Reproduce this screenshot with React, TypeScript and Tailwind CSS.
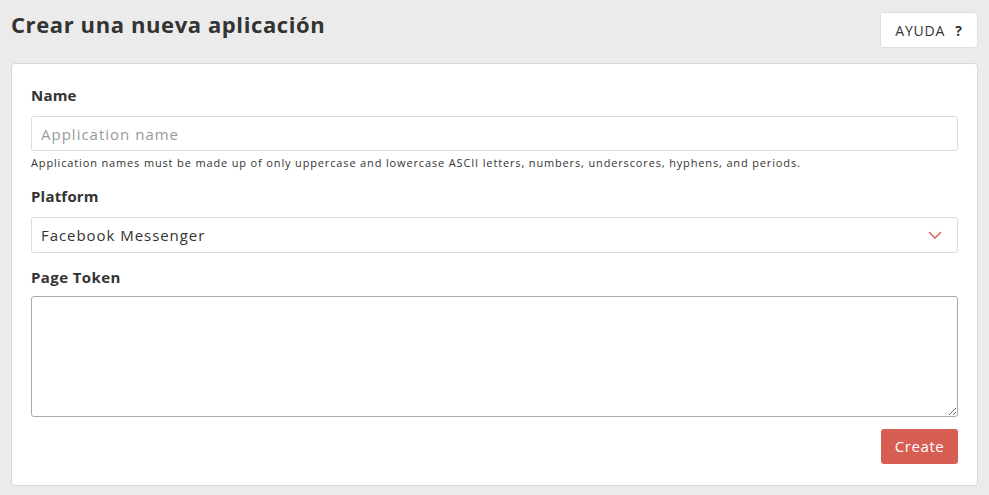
import React from "react";

export default function App() {
  const font = { fontFamily: '"Open Sans", "Liberation Sans", sans-serif' };
  return (
    <div className="min-h-[495px] w-full bg-[#ebebeb] px-[11px] pt-[8px] text-[#333]" style={font}>
      <div className="flex items-start justify-between">
        <h1 className="text-[22px] font-bold leading-[32px] tracking-[0.6px] text-[#333]">
          Crear una nueva aplicación
        </h1>
        <button className="mt-[4px] flex h-[36px] w-[98px] items-center justify-center gap-[10px] rounded-[3px] border border-[#e0e0e0] bg-white text-[14px] tracking-[0.8px] text-[#333]">
          <span>AYUDA</span>
          <span className="font-bold">?</span>
        </button>
      </div>
      <div className="mt-[15px] rounded-[4px] border border-[#d8d8d8] bg-white px-[19px] pb-[21px] pt-[20px]">
        <label className="block text-[15px] font-bold leading-[22px] tracking-[0.2px]">Name</label>
        <input
          className="mt-[10px] block h-[35px] w-full rounded-[3px] border border-[#dcdcdc] px-[9px] text-[15px] tracking-[1px] placeholder:text-[#999] outline-none"
          placeholder="Application name"
        />
        <p className="mt-[4px] text-[11px] leading-[16px] tracking-[0.85px] text-[#333]">
          Application names must be made up of only uppercase and lowercase ASCII letters, numbers, underscores, hyphens, and periods.
        </p>
        <label className="mt-[14px] block text-[15px] font-bold leading-[22px] tracking-[0.2px]">Platform</label>
        <div className="mt-[10px] flex h-[36px] w-full items-center justify-between rounded-[3px] border border-[#dcdcdc] px-[9px] text-[15px] tracking-[0.95px]">
          <span>Facebook Messenger</span>
          <svg width="14" height="8" viewBox="0 0 14 8" className="mr-[6px]">
            <path d="M1 1 L7 7 L13 1" fill="none" stroke="#d9534f" strokeWidth="1.3" />
          </svg>
        </div>
        <label className="mt-[13px] block text-[15px] font-bold leading-[22px] tracking-[0.4px]">Page Token</label>
        <textarea className="mt-[8px] block h-[121px] w-full rounded-[3px] border border-[#aaa] outline-none" />
        <div className="mt-[12px] flex justify-end">
          <button className="h-[35px] w-[77px] rounded-[3px] bg-[#d65e53] text-[15px] tracking-[0.6px] text-white">
            Create
          </button>
        </div>
      </div>
    </div>
  );
}
